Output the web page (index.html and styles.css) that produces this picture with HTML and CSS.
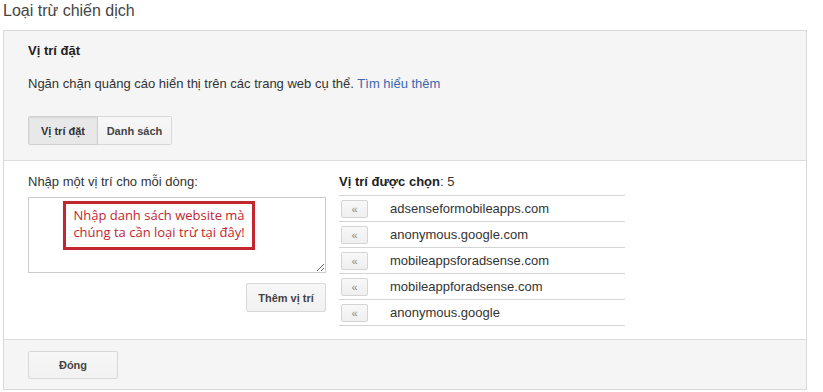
FILE: index.html
```html
<!DOCTYPE html>
<html lang="vi">
<head>
<meta charset="utf-8">
<title>Loại trừ chiến dịch</title>
<link rel="stylesheet" href="styles.css">
</head>
<body>
<h1 class="page-title">Loại trừ chiến dịch</h1>
<div class="panel">
  <div class="panel-top">
    <h2 class="panel-heading">Vị trí đặt</h2>
    <p class="panel-desc">Ngăn chặn quảng cáo hiển thị trên các trang web cụ thể. <a class="link" href="#">Tìm hiểu thêm</a></p>
    <div class="toggle">
      <button class="btn toggle-btn is-active">Vị trí đặt</button>
      <button class="btn toggle-btn">Danh sách</button>
    </div>
  </div>
  <div class="panel-body">
    <div class="col-left">
      <label class="field-label">Nhập một vị trí cho mỗi dòng:</label>
      <div class="textarea-wrap">
        <textarea class="entry"></textarea>
        <div class="note">Nhập danh sách website mà<br>chúng ta cần loại trừ tại đây!</div>
      </div>
      <div class="add-row"><button class="btn add-btn">Thêm vị trí</button></div>
    </div>
    <div class="col-right">
      <div class="selected-title"><b>Vị trí được chọn</b>: 5</div>
      <ul class="selected-list">
        <li class="item"><button class="rm">«</button><span class="item-text">adsenseformobileapps.com</span></li>
        <li class="item"><button class="rm">«</button><span class="item-text">anonymous.google.com</span></li>
        <li class="item"><button class="rm">«</button><span class="item-text">mobileappsforadsense.com</span></li>
        <li class="item"><button class="rm">«</button><span class="item-text">mobileappforadsense.com</span></li>
        <li class="item"><button class="rm">«</button><span class="item-text">anonymous.google</span></li>
      </ul>
    </div>
  </div>
  <div class="panel-foot">
    <button class="btn close-btn">Đóng</button>
  </div>
</div>
</body>
</html>
```
FILE: styles.css
```css
* { box-sizing: border-box; }
html, body { margin: 0; padding: 0; background: #fff; }
body {
  font-family: "Liberation Sans", Arial, sans-serif;
  font-size: 13px;
  line-height: 16px;
  color: #333;
  padding-top: 1px;
}
.page-title {
  margin: 0 0 9px;
  padding-left: 3px;
  font-size: 16px;
  line-height: 20px;
  font-weight: normal;
  color: #444;
}
.panel {
  margin-left: 3px;
  width: 804px;
  height: 360px;
  border: 1px solid #d9d9d9;
  display: flex;
  flex-direction: column;
}
.panel-top {
  background: #f5f5f5;
  padding: 12px 24px 15px;
  border-bottom: 1px solid #dddddd;
}
.panel-heading {
  margin: 0 0 17px;
  font-size: 13px;
  line-height: 16px;
  font-weight: bold;
  color: #222;
}
.panel-desc {
  margin: 0 0 24px;
  color: #333;
}
.link { color: #3a68b0; text-decoration: none; }
.btn {
  font-family: "Liberation Sans", Arial, sans-serif;
  font-size: 11px;
  font-weight: bold;
  color: #444;
  background: linear-gradient(#f7f7f7, #f1f1f1);
  border: 1px solid #d8d8d8;
  border-radius: 2px;
  padding: 0;
  margin: 0;
}
.toggle { display: flex; }
.toggle-btn { height: 29px; }
.toggle-btn:first-child { width: 70px; border-radius: 2px 0 0 2px; }
.toggle-btn:last-child { width: 74px; border-left: 0; border-radius: 0 2px 2px 0; }
.toggle-btn.is-active {
  background: #e8e8e8;
  border-color: #cfcfcf;
  box-shadow: inset 0 1px 2px rgba(0,0,0,0.08);
  color: #333;
}
.panel-body {
  background: #fff;
  padding: 13px 24px 13px;
  border-bottom: 1px solid #dddddd;
  display: flex;
  gap: 13px;
  align-items: flex-start;
}
.col-left { width: 298px; }
.field-label { display: block; color: #333; }
.textarea-wrap { position: relative; margin-top: 7px; }
.entry {
  display: block;
  width: 298px;
  height: 76px;
  border: 1px solid #cccccc;
  border-radius: 0;
  margin: 0;
  padding: 4px;
  font-family: "Liberation Sans", Arial, sans-serif;
  font-size: 13px;
  background: #fff;
}
.note {
  position: absolute;
  left: 35px;
  top: 4px;
  width: 192px;
  height: 49px;
  border: 3px solid #c3262f;
  padding-top: 3px;
  text-align: center;
  font-family: "Open Sans", sans-serif;
  font-size: 13px;
  line-height: 17px;
  color: #c3262f;
  background: #fff;
}
.add-row { display: flex; justify-content: flex-end; margin-top: 10px; }
.add-btn { width: 80px; height: 29px; }
.col-right { width: 286px; }
.selected-title { color: #333; margin-bottom: 5px; }
.selected-title b { color: #222; }
.selected-list {
  list-style: none;
  margin: 0;
  padding: 0;
  border-top: 1px solid #d4d4d4;
}
.item {
  height: 26px;
  border-bottom: 1px solid #d4d4d4;
  display: flex;
  align-items: center;
  padding-left: 2px;
}
.rm {
  width: 27px;
  height: 18px;
  border: 1px solid #d4d4d4;
  background: linear-gradient(#f8f8f8, #efefef);
  border-radius: 2px;
  font-family: "Liberation Sans", Arial, sans-serif;
  font-size: 11px;
  line-height: 14px;
  color: #888;
  padding: 0;
  margin: 0 22px 0 0;
}
.item-text { color: #333; }
.panel-foot {
  flex: 1;
  background: #f5f5f5;
  padding: 11px 24px 0;
}
.close-btn { width: 90px; height: 28px; }
```
